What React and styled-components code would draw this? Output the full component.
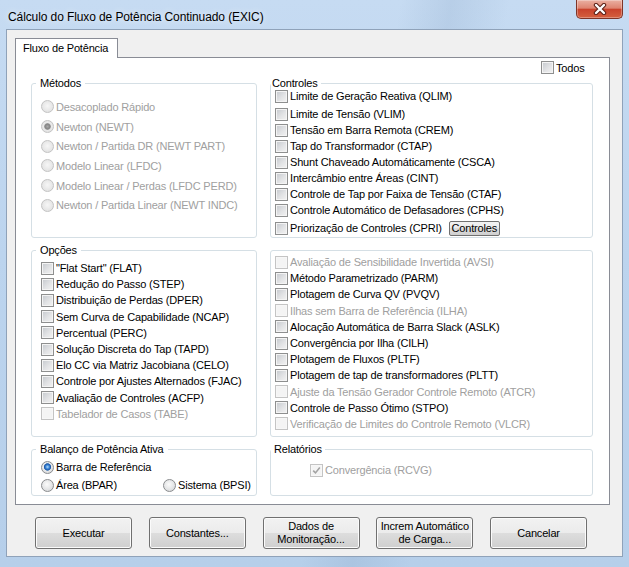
import React from "react";
import styled, { createGlobalStyle } from "styled-components";

const GlobalStyle = createGlobalStyle`
  html, body {
    margin: 0;
    padding: 0;
  }
  body {
    font-family: "Liberation Sans", Arial, sans-serif;
    background: #fff;
  }
`;

const Window = styled.div`
  width: 629px;
  height: 567px;
  display: flex;
  flex-direction: column;
  overflow: hidden;
  background:
    linear-gradient(100deg, transparent 55%, rgba(120, 150, 185, 0.18) 62%, transparent 70%),
    linear-gradient(180deg, #c6dbf2 0%, #bcd4ee 45%, #b6cfea 100%);
`;

const TitleBar = styled.div`
  height: 29px;
  display: flex;
  justify-content: space-between;
  align-items: flex-start;
  flex-shrink: 0;
`;

const Title = styled.div`
  padding: 9px 0 0 8px;
  font-size: 12px;
  line-height: 16px;
  letter-spacing: -0.1px;
  color: #000;
  text-shadow: 0 0 6px rgba(255, 255, 255, 0.9);
`;

const CloseButton = styled.div`
  width: 47px;
  height: 19px;
  margin-right: 6px;
  box-sizing: border-box;
  border: 1px solid #7e3528;
  border-top: none;
  border-radius: 0 0 5px 5px;
  background: linear-gradient(180deg, #eab0a2 0%, #de8470 45%, #c9432c 52%, #d4603f 100%);
  box-shadow: inset 0 0 0 1px rgba(255, 255, 255, 0.3);
  display: flex;
  align-items: center;
  justify-content: center;
`;

const Client = styled.div`
  margin: 0 6px 10px;
  flex: 1;
  border: 1px solid #8fa2b9;
  background: #f0f0f0;
  display: flex;
  flex-direction: column;
`;

const TabStrip = styled.div`
  display: flex;
  padding: 8px 0 0 8px;
`;

const Tab = styled.div`
  position: relative;
  z-index: 1;
  height: 20px;
  margin-bottom: -1px;
  box-sizing: border-box;
  padding: 0 9px 0 7px;
  border: 1px solid #898c95;
  border-bottom: none;
  background: #fff;
  font-size: 11px;
  line-height: 18px;
  letter-spacing: -0.17px;
  color: #000;
`;

const Panel = styled.div`
  margin-left: 8px;
  width: 595px;
  height: 448px;
  box-sizing: border-box;
  border: 1px solid #898c95;
  background: #fff;
  display: flex;
  flex-direction: column;
`;

const TodosRow = styled.div`
  display: flex;
  margin-top: 3px;
  padding-left: 525px;
`;

const Grid = styled.div`
  display: grid;
  grid-template-columns: 226px 323px;
  grid-template-rows: 161px 193px 53px;
  column-gap: 13px;
  row-gap: 6px;
  margin-top: 3px;
  padding-left: 15px;
`;

const Group = styled.fieldset`
  margin: ${(p) => p.$mt || 0}px 0 0;
  padding: 0;
  min-width: 0;
  box-sizing: border-box;
  border: 1px solid #d5dfe5;
  border-radius: 3px;
`;

const Legend = styled.legend`
  margin-left: ${(p) => p.$x}px;
  padding: 0 ${(p) => p.$pr}px 0 ${(p) => p.$pl}px;
  font-size: 11px;
  line-height: 13px;
  letter-spacing: -0.17px;
  color: #000;
`;

const List = styled.div`
  display: flex;
  flex-direction: column;
  margin-top: ${(p) => p.$mt}px;
  padding-left: ${(p) => p.$pl}px;
`;

const Item = styled.div`
  display: flex;
  align-items: center;
  gap: 2px;
  height: ${(p) => p.$h}px;
  margin-top: ${(p) => p.$mt || 0}px;
  margin-bottom: ${(p) => p.$mb || 0}px;
  font-size: 11px;
  letter-spacing: -0.17px;
  white-space: nowrap;
  color: ${(p) => (p.$disabled ? "#a0a0a0" : "#000")};
`;

const SplitRow = styled.div`
  display: grid;
  grid-template-columns: 122px auto;
`;

const Box = styled.span`
  width: 13px;
  height: 13px;
  flex-shrink: 0;
  box-sizing: border-box;
  border: 1px solid ${(p) => (p.$disabled ? "#c4c4c4" : "#8e8f8f")};
  background: ${(p) =>
    p.$disabled
      ? "#f4f4f4"
      : "linear-gradient(135deg, #c4c8cd 0%, #e2e3e5 55%, #f3f3f3 100%)"};
  box-shadow: inset 0 0 0 1px ${(p) => (p.$disabled ? "#f7f7f7" : "#f4f4f4")};
  display: flex;
  align-items: center;
  justify-content: center;
`;

const Dot = styled.span`
  width: 13px;
  height: 13px;
  flex-shrink: 0;
  box-sizing: border-box;
  border-radius: 50%;
  border: 1px solid ${(p) => (p.$disabled ? "#c3c3c3" : "#8a8c8e")};
  background: ${(p) => {
    const base = p.$disabled
      ? "radial-gradient(circle at 50% 45%, #f6f6f6 0%, #e4e4e4 70%, #dadada 100%)"
      : "radial-gradient(circle at 45% 40%, #fbfbfb 0%, #e4e5e6 55%, #cdd0d3 100%)";
    if (!p.$checked) return base;
    const mark = p.$disabled
      ? "radial-gradient(circle, #a8a8a8 0, #858585 2.4px, #9c9c9c 3px, #cfcfcf 3.4px, transparent 3.9px)"
      : "radial-gradient(circle at 50% 45%, #b5daf8 0, #3f8ad8 1.8px, #1d58ad 3px, #4d7fb8 3.5px, transparent 4px)";
    return `${mark}, ${base}`;
  }};
`;

const SmallButton = styled.button`
  margin-left: 5px;
  width: 51px;
  height: 15px;
  padding: 0;
  box-sizing: border-box;
  border: 1px solid #707070;
  border-radius: 2px;
  background: linear-gradient(180deg, #f2f2f2 0%, #ebebeb 50%, #dddddd 50%, #cfcfcf 100%);
  font-family: inherit;
  font-size: 11px;
  line-height: 12px;
  letter-spacing: -0.17px;
  color: #000;
`;

const Footer = styled.div`
  display: flex;
  gap: 16.75px;
  padding: 12px 0 0 28px;
`;

const Button = styled.button`
  width: 97px;
  height: 32px;
  padding: 0;
  box-sizing: border-box;
  border: 1px solid #707070;
  border-radius: 3px;
  background: linear-gradient(180deg, #f2f2f2 0%, #ebebeb 50%, #dddddd 50%, #cfcfcf 100%);
  box-shadow: inset 0 0 0 1px #fbfbfb;
  font-family: inherit;
  font-size: 11px;
  line-height: 13px;
  letter-spacing: -0.17px;
  color: #000;
  text-align: center;
`;

const metodos = [
  "Desacoplado Rápido",
  "Newton (NEWT)",
  "Newton / Partida DR (NEWT PART)",
  "Modelo Linear (LFDC)",
  "Modelo Linear / Perdas (LFDC PERD)",
  "Newton / Partida Linear (NEWT INDC)",
];

const controles = [
  "Limite de Geração Reativa (QLIM)",
  "Limite de Tensão (VLIM)",
  "Tensão em Barra Remota (CREM)",
  "Tap do Transformador (CTAP)",
  "Shunt Chaveado Automáticamente (CSCA)",
  "Intercâmbio entre Áreas (CINT)",
  "Controle de Tap por Faixa de Tensão (CTAF)",
  "Controle Automático de Defasadores (CPHS)",
];

const opcoes = [
  ["\"Flat Start\" (FLAT)"],
  ["Redução do Passo (STEP)"],
  ["Distribuição de Perdas (DPER)"],
  ["Sem Curva de Capabilidade (NCAP)"],
  ["Percentual (PERC)"],
  ["Solução Discreta do Tap (TAPD)"],
  ["Elo CC via Matriz Jacobiana (CELO)"],
  ["Controle por Ajustes Alternados (FJAC)"],
  ["Avaliação de Controles (ACFP)"],
  ["Tabelador de Casos (TABE)", true],
];

const extras = [
  ["Avaliação de Sensibilidade Invertida (AVSI)", true],
  ["Método Parametrizado (PARM)"],
  ["Plotagem de Curva QV (PVQV)"],
  ["Ilhas sem Barra de Referência (ILHA)", true],
  ["Alocação Automática de Barra Slack (ASLK)"],
  ["Convergência por Ilha (CILH)"],
  ["Plotagem de Fluxos (PLTF)"],
  ["Plotagem de tap de transformadores (PLTT)"],
  ["Ajuste da Tensão Gerador Controle Remoto (ATCR)", true],
  ["Controle de Passo Ótimo (STPO)"],
  ["Verificação de Limites do Controle Remoto (VLCR)", true],
];

function Check({ label, disabled, checked, h = 16, mt, mb, children }) {
  return (
    <Item $h={h} $mt={mt} $mb={mb} $disabled={disabled}>
      <Box $disabled={disabled}>
        {checked && (
          <svg width="9" height="9" viewBox="0 0 9 9">
            <path d="M1.2 4.6 L3.5 6.9 L7.8 1.6" fill="none" stroke="#a3a3a3" strokeWidth="1.6" />
          </svg>
        )}
      </Box>
      <span>{label}</span>
      {children}
    </Item>
  );
}

function Radio({ label, disabled, checked, h }) {
  return (
    <Item $h={h} $disabled={disabled}>
      <Dot $disabled={disabled} $checked={checked} />
      <span>{label}</span>
    </Item>
  );
}

export default function App() {
  return (
    <>
      <GlobalStyle />
      <Window>
        <TitleBar>
          <Title>Cálculo do Fluxo de Potência Continuado (EXIC)</Title>
          <CloseButton>
            <svg width="14" height="12" viewBox="0 0 14 12">
              <path d="M3 2 L11 10 M11 2 L3 10" stroke="#5a1f16" strokeWidth="4.4" strokeLinecap="round" />
              <path d="M3 2 L11 10 M11 2 L3 10" stroke="#fff" strokeWidth="2.4" strokeLinecap="round" />
            </svg>
          </CloseButton>
        </TitleBar>
        <Client>
          <TabStrip>
            <Tab>Fluxo de Potência</Tab>
          </TabStrip>
          <Panel>
            <TodosRow>
              <Check label="Todos" h={13} />
            </TodosRow>
            <Grid>
              <Group>
                <Legend $x={4} $pl={4} $pr={4}>Métodos</Legend>
                <List $mt={7} $pl={9}>
                  {metodos.map((m, i) => (
                    <Radio key={m} label={m} h={19.7} disabled checked={i === 1} />
                  ))}
                </List>
              </Group>
              <Group>
                <Legend $x={0} $pl={1} $pr={3}>Controles</Legend>
                <List $mt={-2} $pl={4}>
                  {controles.map((c, i) => (
                    <Check key={c} label={c} mb={i === 0 ? 2 : 0} />
                  ))}
                  <Check label="Priorização de Controles (CPRI)" mt={2}>
                    <SmallButton>Controles</SmallButton>
                  </Check>
                </List>
              </Group>
              <Group>
                <Legend $x={4} $pl={4} $pr={4}>Opções</Legend>
                <List $mt={3} $pl={9}>
                  {opcoes.map(([t, d]) => (
                    <Check key={t} label={t} disabled={d} h={16.2} />
                  ))}
                </List>
              </Group>
              <Group $mt={6}>
                <List $mt={3} $pl={4}>
                  {extras.map(([t, d]) => (
                    <Check key={t} label={t} disabled={d} h={16.2} />
                  ))}
                </List>
              </Group>
              <Group>
                <Legend $x={4} $pl={4} $pr={4}>Balanço de Potência Ativa</Legend>
                <List $mt={2} $pl={9}>
                  <Radio label="Barra de Referência" h={18} checked />
                  <SplitRow>
                    <Radio label="Área (BPAR)" h={18} />
                    <Radio label="Sistema (BPSI)" h={18} />
                  </SplitRow>
                </List>
              </Group>
              <Group>
                <Legend $x={0} $pl={3} $pr={3}>Relatórios</Legend>
                <List $mt={6} $pl={39}>
                  <Check label="Convergência (RCVG)" disabled checked />
                </List>
              </Group>
            </Grid>
          </Panel>
          <Footer>
            <Button>Executar</Button>
            <Button>Constantes...</Button>
            <Button>
              Dados de
              <br />
              Monitoração...
            </Button>
            <Button>
              Increm Automático
              <br />
              de Carga...
            </Button>
            <Button>Cancelar</Button>
          </Footer>
        </Client>
      </Window>
    </>
  );
}
